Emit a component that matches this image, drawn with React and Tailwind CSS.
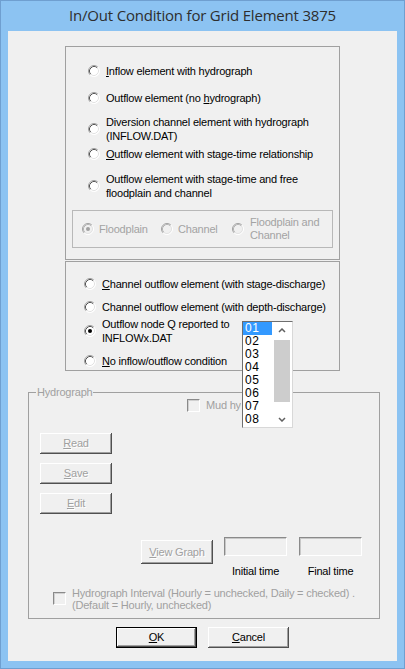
import React from "react";

const Radio = ({ checked, disabled }) => (
  <svg width="12" height="12" viewBox="0 0 12 12" className="shrink-0">
    <circle cx="6" cy="6" r="5.5" fill={disabled ? "#f0f0f0" : "#ffffff"} />
    <path d="M2.11 9.89 A5.5 5.5 0 0 1 9.89 2.11" fill="none" stroke="#a0a0a0" strokeWidth="1" />
    <path d="M2.82 9.18 A4.5 4.5 0 0 1 9.18 2.82" fill="none" stroke={disabled ? "#b4b4b4" : "#555555"} strokeWidth="1" />
    <path d="M9.89 2.11 A5.5 5.5 0 0 1 2.11 9.89" fill="none" stroke="#ffffff" strokeWidth="1" />
    <path d="M9.18 2.82 A4.5 4.5 0 0 1 2.82 9.18" fill="none" stroke="#e3e3e3" strokeWidth="1" />
    {checked && <circle cx="6" cy="6" r="2" fill={disabled ? "#a0a0a0" : "#000000"} />}
  </svg>
);

const Check = () => (
  <div className="w-[13px] h-[13px] shrink-0 bg-[#f0f0f0] border border-t-[#8a8a8a] border-l-[#8a8a8a] border-r-white border-b-white shadow-[inset_1px_1px_#d0d0d0]" />
);

const Btn = ({ children, className, disabled, isDefault }) => (
  <div
    className={
      "flex items-center justify-center bg-[#f0f0f0] shadow-[inset_-1px_-1px_#505050,inset_1px_1px_#ffffff,inset_-2px_-2px_#a0a0a0] " +
      (disabled ? "text-[#a0a0a0] [text-shadow:1px_1px_0_#ffffff] " : "text-black ") +
      (isDefault ? "border border-black " : "") +
      className
    }
  >
    {children}
  </div>
);

const Option = ({ className, checked, children }) => (
  <div className={"flex items-center gap-[6px] leading-[14px] " + className}>
    <Radio checked={checked} />
    <span>{children}</span>
  </div>
);

const Chevron = ({ up }) => (
  <svg width="8" height="5" viewBox="0 0 8 5">
    <polyline
      points={up ? "1,4 4,1 7,4" : "1,1 4,4 7,1"}
      fill="none"
      stroke="#606060"
      strokeWidth="1.5"
    />
  </svg>
);

const TextBox = () => (
  <div className="w-[63px] h-[19px] bg-[#f0f0f0] border border-t-[#8a8a8a] border-l-[#8a8a8a] border-r-white border-b-white shadow-[inset_1px_1px_#c8c8c8]" />
);

export default function App() {
  const nodes = ["01", "02", "03", "04", "05", "06", "07", "08"];
  return (
    <div className="w-[405px] h-[669px] bg-[#8cc3f2] flex flex-col px-[8px] pb-[8px] shadow-[inset_0_0_0_1px_#6f9fd0]">
      <div className="h-[31px] flex items-center justify-center text-[15px] text-[#2e2e2e] font-['Open_Sans',sans-serif] tracking-[-0.2px]">
        In/Out Condition for Grid Element 3875
      </div>

      <div className="relative flex-1 bg-[#f0f0f0] flex flex-col text-[11px] text-black tracking-[-0.2px] font-['Liberation_Sans',Arial,sans-serif]">
        {/* top group */}
        <div className="mt-[15px] ml-[57px] w-[275px] h-[214px] border border-[#a0a0a0] flex flex-col">
          <Option className="mt-[17px] ml-[22px]">
            <u>I</u>nflow element with hydrograph
          </Option>
          <Option className="mt-[13px] ml-[22px]">
            Outflow element (no <u>h</u>ydrograph)
          </Option>
          <Option className="mt-[10px] ml-[22px]">
            Diversion channel element with hydrograph
            <br />
            (INFLOW.DAT)
          </Option>
          <Option className="mt-[4px] ml-[22px]">
            <u>O</u>utflow element with stage-time relationship
          </Option>
          <Option className="mt-[11px] ml-[22px]">
            Outflow element with stage-time and free
            <br />
            floodplain and channel
          </Option>

          <div className="mt-[10px] ml-[6px] w-[261px] h-[38px] border border-[#b8b8b8] flex items-center text-[#a3a3a3] leading-[13px]">
            <div className="ml-[9px] w-[79px] flex items-center gap-[5px]">
              <Radio checked disabled />
              <span>Floodplain</span>
            </div>
            <div className="w-[71px] flex items-center gap-[5px]">
              <Radio disabled />
              <span>Channel</span>
            </div>
            <div className="flex items-center gap-[6px]">
              <Radio disabled />
              <span>
                Floodplain and
                <br />
                Channel
              </span>
            </div>
          </div>
        </div>

        {/* middle group */}
        <div className="mt-[1px] ml-[57px] w-[275px] h-[110px] border border-[#a0a0a0] flex flex-col">
          <Option className="mt-[15px] ml-[18px]">
            <u>C</u>hannel outflow element (with stage-discharge)
          </Option>
          <Option className="mt-[9px] ml-[18px]">
            Channel outflow element (with depth-discharge)
          </Option>
          <Option className="mt-[3px] ml-[18px]" checked>
            Outflow node Q reported to
            <br />
            INFLOWx.DAT
          </Option>
          <Option className="mt-[9px] ml-[18px]">
            <u>N</u>o inflow/outflow condition
          </Option>
        </div>

        {/* hydrograph group */}
        <fieldset className="mt-[14px] ml-[20px] w-[352px] h-[234px] border border-[#a0a0a0]">
          <legend className="ml-[7px] px-[1px] leading-[14px] text-[#a0a0a0]">Hydrograph</legend>
          <div className="flex flex-col">
            <div className="ml-[158px] h-[13px] flex items-center gap-[6px] text-[#a0a0a0]">
              <Check />
              <span className="w-[35px] overflow-hidden whitespace-nowrap">Mud hydrograph</span>
            </div>
            <Btn disabled className="ml-[11px] mt-[21px] w-[72px] h-[21px]">
              <span>
                <u>R</u>ead
              </span>
            </Btn>
            <Btn disabled className="ml-[11px] mt-[9px] w-[72px] h-[21px]">
              <span>
                <u>S</u>ave
              </span>
            </Btn>
            <Btn disabled className="ml-[11px] mt-[9px] w-[72px] h-[21px]">
              <span>
                <u>E</u>dit
              </span>
            </Btn>

            <div className="mt-[23px] flex items-start">
              <Btn disabled className="ml-[112px] mt-[3px] w-[72px] h-[24px]">
                <span>
                  <u>V</u>iew Graph
                </span>
              </Btn>
              <div className="ml-[11px] flex flex-col items-center">
                <TextBox />
                <span className="mt-[8px] leading-[14px]">Initial time</span>
              </div>
              <div className="ml-[12px] flex flex-col items-center">
                <TextBox />
                <span className="mt-[8px] leading-[14px]">Final time</span>
              </div>
            </div>

            <div className="mt-[9px] ml-[24px] flex items-start text-[#a0a0a0] leading-[12px]">
              <div className="mt-[5px]">
                <Check />
              </div>
              <span className="ml-[6px]">
                Hydrograph Interval (Hourly = unchecked, Daily = checked) .
                <br />
                (Default = Hourly, unchecked)
              </span>
            </div>
          </div>
        </fieldset>

        {/* OK / Cancel */}
        <div className="mt-[8px] flex">
          <Btn isDefault className="ml-[108px] w-[81px] h-[21px]">
            <span>
              <u>O</u>K
            </span>
          </Btn>
          <Btn className="ml-[11px] w-[81px] h-[21px]">
            <span>
              <u>C</u>ancel
            </span>
          </Btn>
        </div>

        {/* node list dropped over the groups */}
        <div className="absolute left-[234px] top-[290px] w-[51px] h-[107px] bg-white border border-t-[#6e6e6e] border-l-[#6e6e6e] border-r-[#d8d8d8] border-b-[#d8d8d8] flex text-[12px] tracking-[0.5px] leading-[13px]">
          <div className="w-[31px] flex flex-col">
            {nodes.map((n, i) => (
              <div
                key={n}
                className={
                  "h-[13px] pl-[2px] " +
                  (i === 0 ? "w-[29px] bg-[#3399ff] text-white" : "text-black")
                }
              >
                {n}
              </div>
            ))}
          </div>
          <div className="w-[16px] flex flex-col">
            <div className="h-[16px] flex items-center justify-center">
              <Chevron up />
            </div>
            <div className="flex-1 pt-[2px] pb-[7px] flex flex-col">
              <div className="h-[62px] bg-[#cdcdcd]" />
            </div>
            <div className="h-[16px] flex items-center justify-center">
              <Chevron />
            </div>
          </div>
        </div>
      </div>
    </div>
  );
}
